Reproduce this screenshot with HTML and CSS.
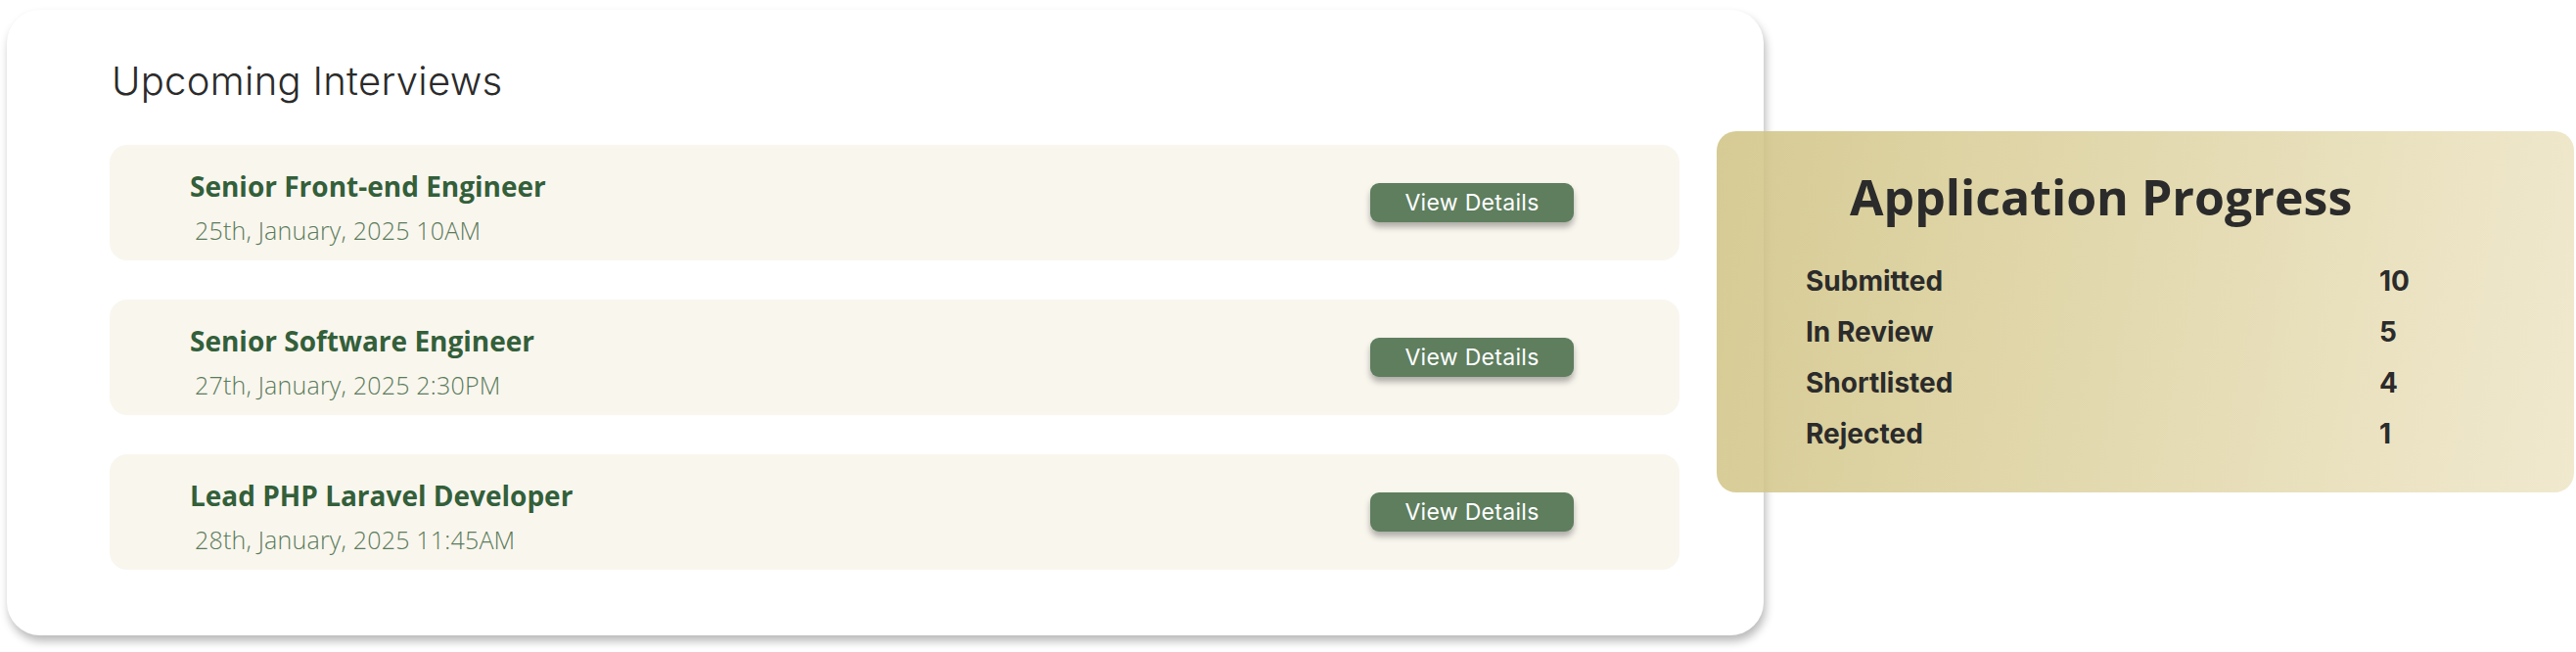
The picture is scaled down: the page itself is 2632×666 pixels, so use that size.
FILE: index.html
```html
<!DOCTYPE html>
<html lang="en">
<head>
<meta charset="utf-8">
<title>Dashboard</title>
<link rel="stylesheet" href="styles.css">
</head>
<body>
<div class="page">
  <section class="interviews">
    <h2 class="interviews-title">Upcoming Interviews</h2>
    <div class="interview-list">
      <div class="interview">
        <div class="interview-info">
          <div class="interview-role">Senior Front-end Engineer</div>
          <div class="interview-date">25th, January, 2025 10AM</div>
        </div>
        <button class="details-btn">View Details</button>
      </div>
      <div class="interview">
        <div class="interview-info">
          <div class="interview-role">Senior Software Engineer</div>
          <div class="interview-date">27th, January, 2025 2:30PM</div>
        </div>
        <button class="details-btn">View Details</button>
      </div>
      <div class="interview">
        <div class="interview-info">
          <div class="interview-role">Lead PHP Laravel Developer</div>
          <div class="interview-date">28th, January, 2025 11:45AM</div>
        </div>
        <button class="details-btn">View Details</button>
      </div>
    </div>
  </section>
  <section class="progress">
    <h2 class="progress-title">Application Progress</h2>
    <div class="progress-grid">
      <div class="progress-label">Submitted</div><div class="progress-value">10</div>
      <div class="progress-label">In Review</div><div class="progress-value">5</div>
      <div class="progress-label">Shortlisted</div><div class="progress-value">4</div>
      <div class="progress-label">Rejected</div><div class="progress-value">1</div>
    </div>
  </section>
</div>
</body>
</html>
```

FILE: styles.css
```css
* { box-sizing: border-box; }

html, body {
  margin: 0;
  padding: 0;
  background: #ffffff;
}

body {
  width: 2632px;
  height: 666px;
  overflow: hidden;
  font-family: "Open Sans", "Noto Sans", sans-serif;
}

.page {
  display: flex;
  align-items: flex-start;
}

.interviews {
  flex-shrink: 0;
  width: 1795px;
  height: 639px;
  margin: 10px 0 0 7px;
  padding: 53px 86px 0 105px;
  background: #ffffff;
  border-radius: 34px;
  box-shadow: 2px 6px 10px rgba(0, 0, 0, 0.28);
}

.interviews-title {
  margin: 0 0 45px 2px;
  font-family: "Inter", sans-serif;
  font-weight: 300;
  font-size: 40px;
  line-height: 40px;
  letter-spacing: 0.3px;
  color: #2b2b2b;
}

.interview-list {
  display: flex;
  flex-direction: column;
  gap: 40px;
}

.interview {
  display: flex;
  align-items: center;
  justify-content: space-between;
  height: 118px;
  padding: 0 108px 0 82px;
  background: #f9f6ee;
  border-radius: 18px;
}

.interview-info {
  padding-top: 9px;
}

.interview-role {
  font-family: "Open Sans", sans-serif;
  font-weight: 700;
  font-size: 28px;
  line-height: 28px;
  color: #335f3a;
  margin-bottom: 19px;
}

.interview-date {
  margin-left: 5px;
  font-family: "Open Sans", sans-serif;
  font-weight: 300;
  font-size: 25px;
  line-height: 25px;
  letter-spacing: 0.2px;
  color: #5a7b5a;
}

.details-btn {
  width: 208px;
  height: 40px;
  padding: 0;
  border: none;
  border-radius: 9px;
  background: #5e7e5e;
  color: #ffffff;
  font-family: "Inter", sans-serif;
  font-weight: 400;
  font-size: 23px;
  letter-spacing: 0.3px;
  line-height: 40px;
  box-shadow: 0 5px 6px rgba(0, 0, 0, 0.3);
}

.progress {
  flex-shrink: 0;
  width: 876px;
  height: 369px;
  margin: 134px 0 0 -48px;
  padding: 42px 0 0 91px;
  border-radius: 20px;
  background: linear-gradient(100deg, rgba(207, 194, 129, 0.85) 0%, rgba(238, 229, 198, 0.85) 100%);
}

.progress-title {
  margin: 0 0 35px 45px;
  font-family: "Open Sans", sans-serif;
  font-weight: 700;
  font-size: 50px;
  line-height: 50px;
  color: #2b2b2b;
}

.progress-grid {
  display: grid;
  grid-template-columns: 586px auto;
}

.progress-label,
.progress-value {
  font-family: "Inter", sans-serif;
  font-weight: 700;
  font-size: 28px;
  line-height: 52px;
  color: #2b2b2b;
}
```
